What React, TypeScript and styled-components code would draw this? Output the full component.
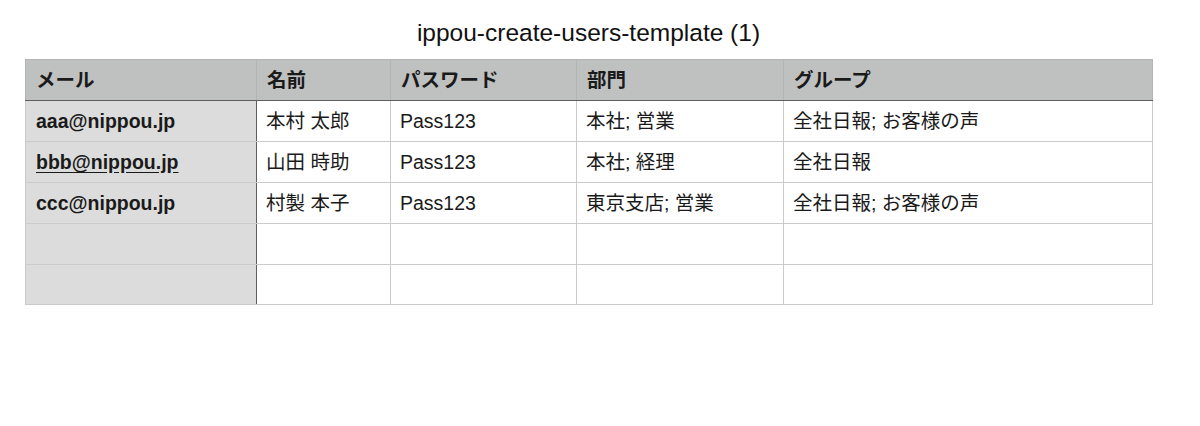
import React from 'react';
import styled, { createGlobalStyle } from 'styled-components';

const GlobalStyle = createGlobalStyle`
  body {
    margin: 0;
    background: #ffffff;
    font-family: 'Liberation Sans', 'Noto Sans CJK JP', sans-serif;
    color: #1a1a1a;
  }
`;

type Row = {
  email: string;
  name: string;
  password: string;
  dept: string;
  group: string;
  underline?: boolean;
};

const rows: Row[] = [
  { email: 'aaa@nippou.jp', name: '本村 太郎', password: 'Pass123', dept: '本社; 営業', group: '全社日報; お客様の声' },
  { email: 'bbb@nippou.jp', name: '山田 時助', password: 'Pass123', dept: '本社; 経理', group: '全社日報', underline: true },
  { email: 'ccc@nippou.jp', name: '村製 本子', password: 'Pass123', dept: '東京支店; 営業', group: '全社日報; お客様の声' },
  { email: '', name: '', password: '', dept: '', group: '' },
  { email: '', name: '', password: '', dept: '', group: '' },
];

const columns = [231, 134, 186, 207, 369];

const Page = styled.div`
  width: 1127px;
  padding: 18px 0 0 25px;
`;

const Title = styled.h1`
  margin: 0 0 11px 0;
  font-size: 24.5px;
  font-weight: 400;
  line-height: 30px;
  text-align: center;
  color: #111;
`;

const Sheet = styled.table`
  width: 1127px;
  border-collapse: collapse;
  table-layout: fixed;
  font-size: 19.5px;
  line-height: 22px;

  tbody tr:last-child td {
    height: 39px;
  }
`;

const HeadCell = styled.th`
  height: 40px;
  padding: 0 10px;
  text-align: left;
  font-weight: 700;
  background: #bfc1c0;
  border: 1px solid #b3b5b4;
  border-bottom: 1px solid #5e5e5e;
`;

const Cell = styled.td<{ $key?: boolean }>`
  height: 40px;
  padding: 0 9px;
  padding-left: ${(p) => (p.$key ? '10px' : '9px')};
  background: ${(p) => (p.$key ? '#dcdcdc' : '#ffffff')};
  font-weight: ${(p) => (p.$key ? 700 : 400)};
  border: 1px solid #cbcbcb;
  ${(p) => (p.$key ? 'border-right: 1px solid #5e5e5e;' : '')}
`;

const Mail = styled.span<{ $underline?: boolean }>`
  text-decoration: ${(p) => (p.$underline ? 'underline' : 'none')};
  text-underline-offset: 3px;
`;

export default function App() {
  return (
    <>
      <GlobalStyle />
      <Page>
        <Title>ippou-create-users-template (1)</Title>
        <Sheet>
          <colgroup>
            {columns.map((w, i) => (
              <col key={i} style={{ width: w }} />
            ))}
          </colgroup>
          <thead>
            <tr>
              <HeadCell>メール</HeadCell>
              <HeadCell>名前</HeadCell>
              <HeadCell>パスワード</HeadCell>
              <HeadCell>部門</HeadCell>
              <HeadCell>グループ</HeadCell>
            </tr>
          </thead>
          <tbody>
            {rows.map((r, i) => (
              <tr key={i}>
                <Cell $key>
                  <Mail $underline={r.underline}>{r.email}</Mail>
                </Cell>
                <Cell>{r.name}</Cell>
                <Cell>{r.password}</Cell>
                <Cell>{r.dept}</Cell>
                <Cell>{r.group}</Cell>
              </tr>
            ))}
          </tbody>
        </Sheet>
      </Page>
    </>
  );
}
